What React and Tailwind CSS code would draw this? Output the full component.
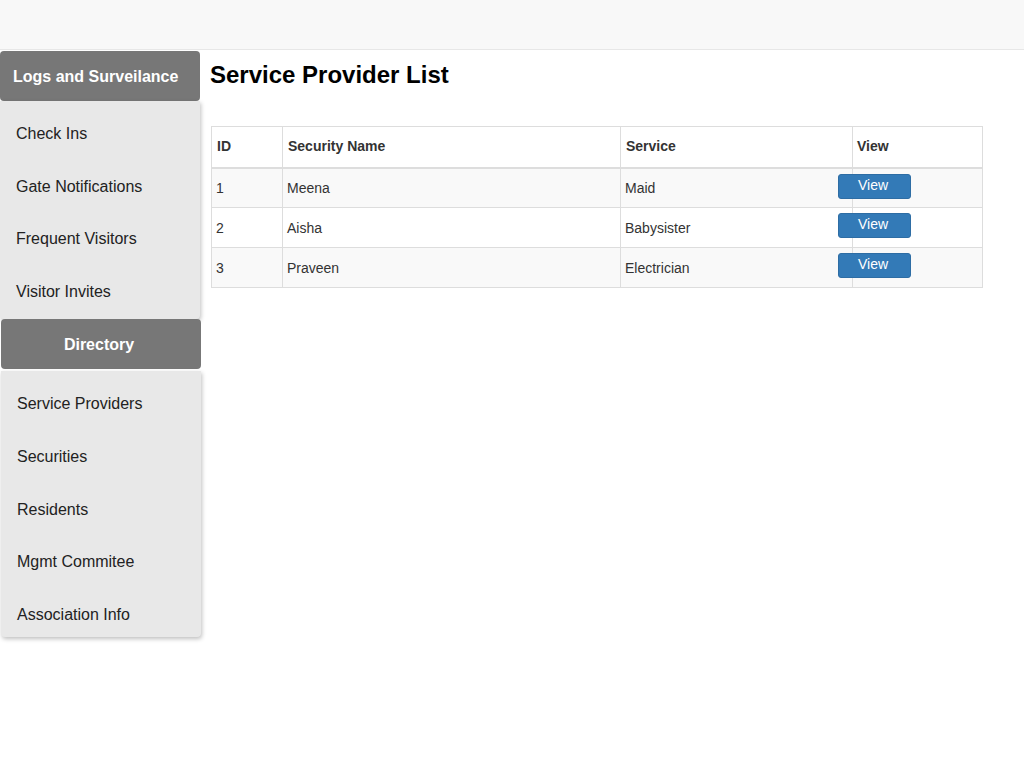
export default function App() {
  const rows = [
    { id: 1, name: "Meena", service: "Maid" },
    { id: 2, name: "Aisha", service: "Babysister" },
    { id: 3, name: "Praveen", service: "Electrician" },
  ];
  const list1 = ["Check Ins", "Gate Notifications", "Frequent Visitors", "Visitor Invites"];
  const list2 = ["Service Providers", "Securities", "Residents", "Mgmt Commitee", "Association Info"];
  return (
    <div className="min-h-[768px] bg-white text-[#333] font-['Liberation_Sans',Arial,sans-serif]">
      <div className="h-[50px] bg-[#f8f8f8] border-b border-[#e7e7e7]" />
      <div className="flex">
        <div className="w-[201px] shrink-0 mt-px">
          <div className="w-[200px] h-[50px] bg-[#777] rounded-[4px] flex items-center pl-[13px] pt-[2px] text-white font-bold text-[16px]">
            Logs and Surveilance
          </div>
          <div className="w-[200px] h-[218px] pt-[7px] bg-[#e8e8e8] rounded-b-[4px] shadow-[1px_2px_4px_rgba(0,0,0,0.25)]">
            {list1.map((t) => (
              <div key={t} className="h-[52.6px] flex items-center pl-[16px] text-[16px] text-[#222]">
                {t}
              </div>
            ))}
          </div>
          <div className="ml-px w-[200px] h-[50px] bg-[#777] rounded-[4px] flex items-center justify-center pr-[4px] pt-[2px] text-white font-bold text-[16px]">
            Directory
          </div>
          <div className="ml-px mt-[2px] w-[200px] h-[266px] pt-[7px] bg-[#e8e8e8] rounded-b-[4px] shadow-[1px_2px_4px_rgba(0,0,0,0.25)]">
            {list2.map((t) => (
              <div key={t} className="h-[52.7px] flex items-center pl-[16px] text-[16px] text-[#222]">
                {t}
              </div>
            ))}
          </div>
        </div>
        <div className="pl-[9px] flex-1">
          <h3 className="mt-[12px] text-[24px] leading-[26px] font-bold text-black">Service Provider List</h3>
          <table className="mt-[38px] ml-px w-[772px] border-collapse border border-[#ddd] text-[14px] text-[#333]">
            <thead>
              <tr className="h-[41px]">
                <th className="w-[71px] text-left font-bold px-[5px] border border-[#ddd] border-b-2">ID</th>
                <th className="w-[338px] text-left font-bold px-[5px] border border-[#ddd] border-b-2">Security Name</th>
                <th className="w-[232px] text-left font-bold px-[5px] border border-[#ddd] border-b-2">Service</th>
                <th className="text-left font-bold px-[4px] border border-[#ddd] border-b-2">View</th>
              </tr>
            </thead>
            <tbody>
              {rows.map((r, i) => (
                <tr key={r.id} className={`h-[40px] ${i % 2 === 0 ? "bg-[#f9f9f9]" : "bg-white"}`}>
                  <td className="px-[4px] pt-[2px] border border-[#ddd]">{r.id}</td>
                  <td className="px-[4px] pt-[2px] border border-[#ddd]">{r.name}</td>
                  <td className="px-[4px] pt-[2px] border border-[#ddd]">{r.service}</td>
                  <td className="px-0 border border-[#ddd] align-top pt-[5px]">
                    <button className="-ml-[15px] w-[73px] h-[25px] rounded-[3px] bg-[#337ab7] border border-[#2e6da4] text-white text-[14px] leading-none pb-[3px] pr-[3px]">
                      View
                    </button>
                  </td>
                </tr>
              ))}
            </tbody>
          </table>
        </div>
      </div>
    </div>
  );
}
